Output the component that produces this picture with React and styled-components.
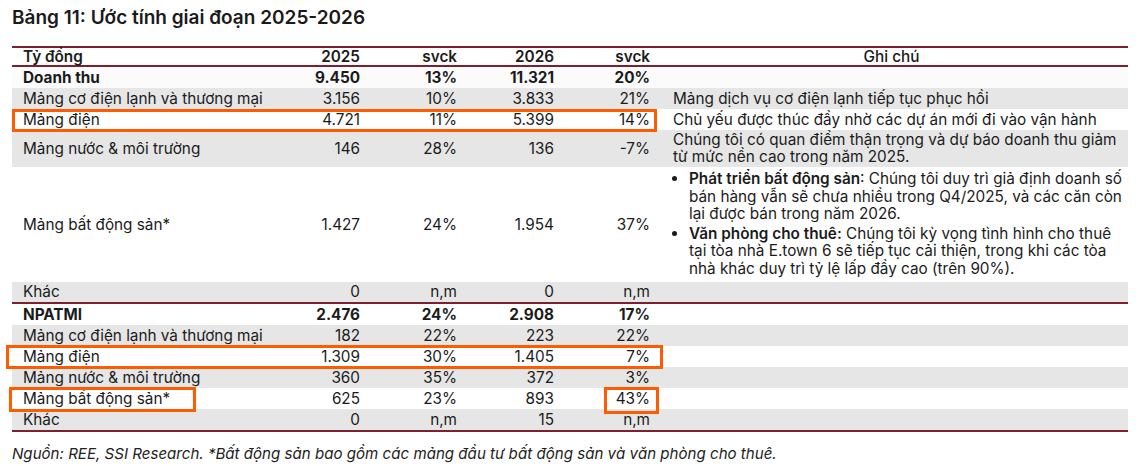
import React from "react";
import styled, { createGlobalStyle } from "styled-components";

const GlobalStyle = createGlobalStyle`
  body {
    margin: 0;
    background: #ffffff;
    font-family: Inter, "Noto Sans", "Liberation Sans", sans-serif;
    color: #1b1b1b;
  }
`;

const revenue = [
  { label: "Mảng cơ điện lạnh và thương mại", v: ["3.156", "10%", "3.833", "21%"], note: "Mảng dịch vụ cơ điện lạnh tiếp tục phục hồi", shade: true },
  { label: "Mảng điện", v: ["4.721", "11%", "5.399", "14%"], note: "Chủ yếu được thúc đẩy nhờ các dự án mới đi vào vận hành" },
  { label: "Mảng nước & môi trường", v: ["146", "28%", "136", "-7%"], note: "Chúng tôi có quan điểm thận trọng và dự báo doanh thu giảm từ mức nền cao trong năm 2025.", shade: true },
];

const profit = [
  { label: "Mảng cơ điện lạnh và thương mại", v: ["182", "22%", "223", "22%"], shade: true },
  { label: "Mảng điện", v: ["1.309", "30%", "1.405", "7%"] },
  { label: "Mảng nước & môi trường", v: ["360", "35%", "372", "3%"], shade: true },
  { label: "Mảng bất động sản*", v: ["625", "23%", "893", "43%"] },
  { label: "Khác", v: ["0", "n,m", "15", "n,m"], shade: true },
];

const DataRow = ({ row, bold, line }) => (
  <Row $shade={row.shade} $line={line} $light={row.light}>
    <Label $bold={bold}>{row.label}</Label>
    {row.v.map((x, i) => (
      <Num key={i} $bold={bold}>{x}</Num>
    ))}
    <Note>{row.note}</Note>
  </Row>
);

const App = () => {
  return (
    <Page>
      <GlobalStyle />
      <Title>Bảng 11: Ước tính giai đoạn 2025-2026</Title>
      <Table>
        <Row $head>
          <Label $semi>Tỷ đồng</Label>
          <Num $semi>2025</Num>
          <Num $semi>svck</Num>
          <Num $semi>2026</Num>
          <Num $semi>svck</Num>
          <Note $center>Ghi chú</Note>
        </Row>
        <DataRow row={{ label: "Doanh thu", v: ["9.450", "13%", "11.321", "20%"], light: true }} bold />
        {revenue.map((r) => (
          <DataRow key={r.label} row={r} />
        ))}
        <Row>
          <Label>Mảng bất động sản*</Label>
          <Num>1.427</Num>
          <Num>24%</Num>
          <Num>1.954</Num>
          <Num>37%</Num>
          <Note>
            <Bullets>
              <li>
                <strong>Phát triển bất động sản</strong>: Chúng tôi duy trì giả định doanh số bán hàng vẫn sẽ chưa nhiều trong Q4/2025, và các căn còn lại được bán trong năm 2026.
              </li>
              <li>
                <strong>Văn phòng cho thuê:</strong> Chúng tôi kỳ vọng tình hình cho thuê tại tòa nhà E.town 6 sẽ tiếp tục cải thiện, trong khi các tòa nhà khác duy trì tỷ lệ lấp đầy cao (trên 90%).
              </li>
            </Bullets>
          </Note>
        </Row>
        <DataRow row={{ label: "Khác", v: ["0", "n,m", "0", "n,m"], shade: true }} line />
        <DataRow row={{ label: "NPATMI", v: ["2.476", "24%", "2.908", "17%"] }} bold />
        {profit.map((r) => (
          <DataRow key={r.label} row={r} />
        ))}

        <Mark $left={0} $top={61} $width={645} $height={23} />
        <Mark $left={-6} $top={297} $width={657} $height={24} />
        <Mark $left={-3} $top={339} $width={187} $height={25} />
        <Mark $left={592} $top={339} $width={55} $height={27} />
      </Table>
      <Source>
        Nguồn: REE, SSI Research. *Bất động sản bao gồm các mảng đầu tư bất động sản và văn phòng cho thuê.
      </Source>
    </Page>
  );
};

export default App;

const Page = styled.div`
  padding: 6px 0 0 12px;
  width: 1116px;
`;

const Title = styled.h1`
  margin: 0 0 16px;
  font-size: 19px;
  line-height: 24px;
  font-weight: 600;
  color: #1a1a1a;
`;

const Table = styled.div`
  position: relative;
  border-top: 2px solid #7d1f2c;
  border-bottom: 2px solid #7d1f2c;
`;

const Row = styled.div`
  display: grid;
  grid-template-columns: 268px 85px 97px 97px 96px 1fr;
  align-items: center;
  min-height: ${(p) => (p.$head ? "17px" : p.$line ? "20px" : "21px")};
  background: ${(p) => (p.$shade ? "#e6e6e6" : p.$light ? "#fbfbfb" : "#ffffff")};
  border-bottom: ${(p) => (p.$head || p.$line ? "2px solid #7d1f2c" : "none")};
  font-size: 15.3px;
  line-height: ${(p) => (p.$head ? "17px" : "20px")};
`;

const weight = (p) => (p.$semi ? 600 : p.$bold ? 700 : 400);

const Label = styled.div`
  padding-left: 11px;
  font-weight: ${weight};
  white-space: nowrap;
`;

const Num = styled.div`
  padding-right: 5px;
  text-align: right;
  font-weight: ${weight};
  white-space: nowrap;
`;

const Note = styled.div`
  padding: ${(p) => (p.$center ? "0" : "1px 2px 2px 18px")};
  text-align: ${(p) => (p.$center ? "center" : "left")};
  font-weight: ${(p) => (p.$center ? 500 : 400)};
  line-height: 17px;
  min-height: 17px;
`;

const Bullets = styled.ul`
  margin: 0 0 3px;
  padding-left: 16px;
  line-height: 17.5px;

  li {
    margin-top: 2px;
  }

  strong {
    font-weight: 600;
  }
`;

const Mark = styled.div`
  position: absolute;
  left: ${(p) => p.$left}px;
  top: ${(p) => p.$top}px;
  width: ${(p) => p.$width}px;
  height: ${(p) => p.$height}px;
  border: 3px solid #ff5b00;
  box-sizing: border-box;
  pointer-events: none;
`;

const Source = styled.p`
  margin: 13px 0 0;
  font-size: 15.1px;
  line-height: 18px;
  font-style: italic;
  color: #222;
`;
